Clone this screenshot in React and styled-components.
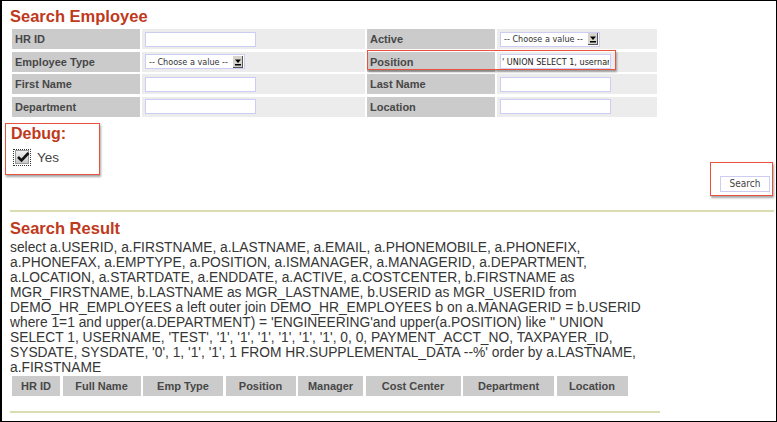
import React from 'react';
import styled, { createGlobalStyle } from 'styled-components';

// --- GLOBAL ---

const GlobalStyle = createGlobalStyle`
  html, body {
    margin: 0;
    padding: 0;
    background: #fff;
  }
  body {
    font-family: 'Liberation Sans', Arial, sans-serif;
  }
`;

const RED = '#c0391c';
const MARK = '#e9523d';

// --- FRAME ---

const Frame = styled.div`
  width: 777px;
  height: 422px;
  box-sizing: border-box;
  border: 1px solid #000;
  border-left-width: 2px;
  padding: 5px 0 0 8px;
  overflow: hidden;
  color: #444;
`;

const Heading = styled.h2`
  margin: ${(p) => p.$mt || 0}px 0 0 0;
  font-size: 16.5px;
  line-height: 20px;
  font-weight: bold;
  color: ${RED};
`;

// --- FORM ---

const FormWrap = styled.div`
  position: relative;
  margin: 3px 0 0 2px;
  width: 645px;
`;

const FormGrid = styled.div`
  display: grid;
  grid-template-columns: 128px 223px 128px 160px;
  grid-auto-rows: 20px;
  column-gap: 2px;
  row-gap: 2.5px;
`;

const LabelCell = styled.div`
  display: flex;
  align-items: center;
  padding-left: 3px;
  background: #cbcbcb;
  font-size: 11px;
  font-weight: bold;
  color: #474747;
`;

const ValueCell = styled.div`
  display: flex;
  align-items: center;
  padding-left: 3px;
  background: #ececec;
`;

const TextInput = styled.input`
  box-sizing: border-box;
  width: 111px;
  height: 15px;
  margin: 0;
  padding: 0 1px;
  border: 1px solid #cdcdf3;
  background: #fff;
  font-family: 'DejaVu Sans Condensed', 'DejaVu Sans', sans-serif;
  font-size: 9px;
  color: #222;
  outline: none;
`;

const SelectBox = styled.div`
  box-sizing: border-box;
  display: flex;
  align-items: center;
  justify-content: space-between;
  width: 100px;
  height: 15px;
  padding: 0 1px 0 3px;
  border: 1px solid #cdcdf3;
  background: #fff;
  font-family: 'DejaVu Sans Condensed', 'DejaVu Sans', sans-serif;
  font-size: 9px;
  color: #333;
  white-space: nowrap;
`;

const PositionMark = styled.div`
  position: absolute;
  left: 355px;
  top: 21px;
  width: 249px;
  height: 20px;
  box-sizing: border-box;
  border: 1px solid ${MARK};
  box-shadow: 1px 2px 2px rgba(0, 0, 0, 0.35);
  pointer-events: none;
`;

const DropArrow = () => (
  <svg width="10" height="12" viewBox="0 0 10 12">
    <rect x="0" y="0" width="10" height="12" fill="#d6d3cc" />
    <rect x="9" y="0" width="1" height="12" fill="#555" />
    <rect x="0" y="11" width="10" height="1" fill="#555" />
    <path d="M2 3.5 L8 3.5 L5 7 Z" fill="#000" />
    <rect x="2" y="8" width="6" height="1.5" fill="#000" />
  </svg>
);

const Select = () => (
  <SelectBox>
    <span>-- Choose a value --</span>
    <DropArrow />
  </SelectBox>
);

// --- DEBUG + SEARCH ---

const ControlRow = styled.div`
  display: flex;
  justify-content: space-between;
  align-items: flex-start;
  margin: 6px 3px 0 -5px;
`;

const DebugBox = styled.div`
  box-sizing: border-box;
  width: 95px;
  height: 52px;
  padding: 1px 0 0 5px;
  border: 1px solid ${MARK};
  box-shadow: 1px 2px 2px rgba(0, 0, 0, 0.35);
`;

const DebugTitle = styled.div`
  font-size: 16px;
  line-height: 18px;
  font-weight: bold;
  color: ${RED};
`;

const CheckRow = styled.label`
  display: flex;
  align-items: center;
  gap: 6px;
  margin: 6px 0 0 2px;
  font-size: 13.5px;
  color: #444;
`;

const CheckBox = styled.span`
  box-sizing: border-box;
  display: flex;
  align-items: center;
  justify-content: center;
  width: 18px;
  height: 17px;
  outline: 1px dotted #333;
  outline-offset: -1px;
  padding: 2px;
`;

const CheckInner = styled.span`
  display: block;
  width: 13px;
  height: 12px;
  border: 1px solid #9a9a9a;
  background: linear-gradient(#f2f2f2, #c9c9c9);
  position: relative;
  svg {
    position: absolute;
    left: 0;
    top: -1px;
  }
`;

const SearchBox = styled.div`
  box-sizing: border-box;
  display: flex;
  justify-content: flex-end;
  align-items: flex-end;
  width: 63px;
  height: 34px;
  margin-top: 39px;
  padding: 0 2px 3px 0;
  border: 1px solid ${MARK};
  box-shadow: 1px 2px 2px rgba(0, 0, 0, 0.35);
`;

const SearchButton = styled.button`
  box-sizing: border-box;
  width: 50px;
  height: 16px;
  margin: 0;
  padding: 0;
  border: 1px solid #cdcdf3;
  background: #fff;
  font-family: 'DejaVu Sans Condensed', 'DejaVu Sans', sans-serif;
  font-size: 10px;
  color: #444;
`;

const Rule = styled.div`
  height: 2px;
  background: #dcdcb2;
  margin-top: ${(p) => p.$mt}px;
  width: ${(p) => p.$w}px;
`;

// --- RESULT ---

const SqlText = styled.p`
  margin: 2px 0 0 0;
  width: 650px;
  font-size: 13.8px;
  line-height: 15px;
  color: #363636;
`;

const ResultHead = styled.div`
  display: flex;
  gap: 2.5px;
  margin: 1px 0 0 2px;
`;

const HeadCell = styled.div`
  display: flex;
  align-items: center;
  justify-content: center;
  width: ${(p) => p.$w}px;
  height: 20px;
  background: #cbcbcb;
  font-size: 11px;
  font-weight: bold;
  color: #474747;
`;

const SQL =
  "select a.USERID, a.FIRSTNAME, a.LASTNAME, a.EMAIL, a.PHONEMOBILE, a.PHONEFIX, a.PHONEFAX, a.EMPTYPE, a.POSITION, a.ISMANAGER, a.MANAGERID, a.DEPARTMENT, a.LOCATION, a.STARTDATE, a.ENDDATE, a.ACTIVE, a.COSTCENTER, b.FIRSTNAME as MGR_FIRSTNAME, b.LASTNAME as MGR_LASTNAME, b.USERID as MGR_USERID from DEMO_HR_EMPLOYEES a left outer join DEMO_HR_EMPLOYEES b on a.MANAGERID = b.USERID where 1=1 and upper(a.DEPARTMENT) = 'ENGINEERING'and upper(a.POSITION) like '' UNION SELECT 1, USERNAME, 'TEST', '1', '1', '1', '1', '1', '1', 0, 0, PAYMENT_ACCT_NO, TAXPAYER_ID, SYSDATE, SYSDATE, '0', 1, '1', '1', 1 FROM HR.SUPPLEMENTAL_DATA --%' order by a.LASTNAME, a.FIRSTNAME";

const INJECTED =
  "' UNION SELECT 1, username, 'TEST', '1', '1', '1', '1', '1', '1', 0, 0, PAYMENT_ACCT_NO, TAXPAYER_ID, SYSDATE, SYSDATE, '0', 1, '1', '1', 1 FROM HR.SUPPLEMENTAL_DATA --";

const columns = [
  ['HR ID', 48],
  ['Full Name', 78],
  ['Emp Type', 80],
  ['Position', 70],
  ['Manager', 65],
  ['Cost Center', 95],
  ['Department', 91],
  ['Location', 71],
];

const App = () => (
  <>
    <GlobalStyle />
    <Frame>
      <Heading>Search Employee</Heading>

      <FormWrap>
        <FormGrid>
          <LabelCell>HR ID</LabelCell>
          <ValueCell><TextInput /></ValueCell>
          <LabelCell>Active</LabelCell>
          <ValueCell><Select /></ValueCell>

          <LabelCell>Employee Type</LabelCell>
          <ValueCell><Select /></ValueCell>
          <LabelCell>Position</LabelCell>
          <ValueCell><TextInput readOnly value={INJECTED} /></ValueCell>

          <LabelCell>First Name</LabelCell>
          <ValueCell><TextInput /></ValueCell>
          <LabelCell>Last Name</LabelCell>
          <ValueCell><TextInput /></ValueCell>

          <LabelCell>Department</LabelCell>
          <ValueCell><TextInput /></ValueCell>
          <LabelCell>Location</LabelCell>
          <ValueCell><TextInput /></ValueCell>
        </FormGrid>
        <PositionMark />
      </FormWrap>

      <ControlRow>
        <DebugBox>
          <DebugTitle>Debug:</DebugTitle>
          <CheckRow>
            <CheckBox>
              <CheckInner>
                <svg width="15" height="14" viewBox="0 0 15 14">
                  <path d="M2 7 L5.5 10.5 L12.5 3" fill="none" stroke="#111" strokeWidth="2.6" />
                </svg>
              </CheckInner>
            </CheckBox>
            Yes
          </CheckRow>
        </DebugBox>
        <SearchBox>
          <SearchButton>Search</SearchButton>
        </SearchBox>
      </ControlRow>

      <Rule $mt={14} $w={764} />

      <Heading $mt={6}>Search Result</Heading>
      <SqlText>{SQL}</SqlText>

      <ResultHead>
        {columns.map(([name, w]) => (
          <HeadCell key={name} $w={w}>{name}</HeadCell>
        ))}
      </ResultHead>

      <Rule $mt={15} $w={650} />
    </Frame>
  </>
);

export default App;
